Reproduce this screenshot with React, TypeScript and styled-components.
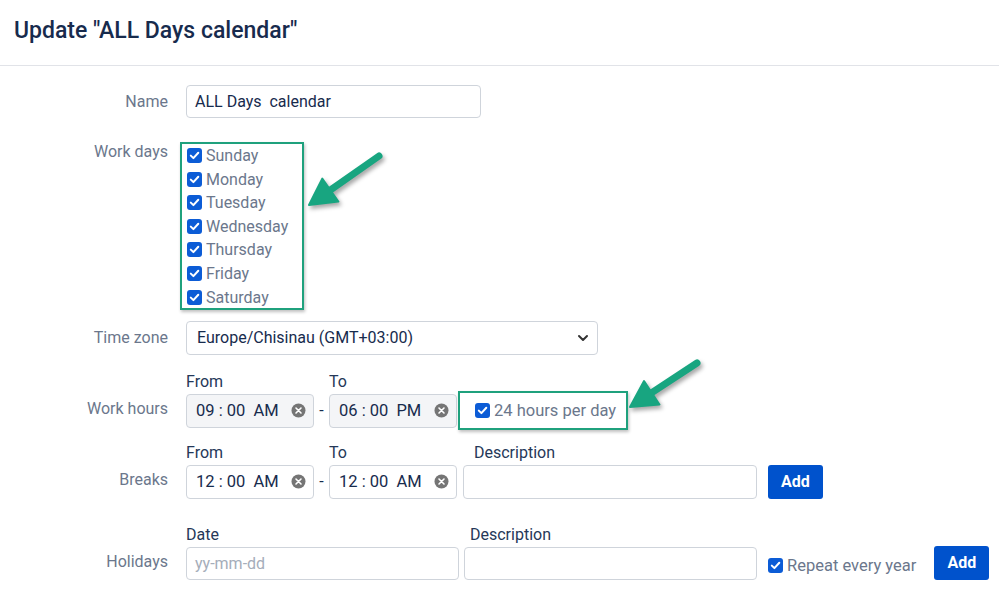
import React from "react";
import styled, { createGlobalStyle } from "styled-components";

const GlobalStyle = createGlobalStyle`
  body {
    margin: 0;
    background: #fff;
    font-family: Roboto, "Liberation Sans", Arial, sans-serif;
  }
`;

const Page = styled.div`
  position: relative;
  width: 999px;
  height: 595px;
  overflow: hidden;
  background: #fff;
`;

const Header = styled.div`
  height: 66px;
  display: flex;
  align-items: center;
  padding: 0 0 4px 14px;
  box-sizing: border-box;
  border-bottom: 1px solid #e1e3e8;
`;

const Title = styled.h1`
  margin: 0;
  font-size: 23px;
  font-weight: 500;
  color: #172b4d;
`;

const Form = styled.div`
  padding-top: 19px;
`;

const Row = styled.div<{ $top: number; $align?: string }>`
  display: flex;
  align-items: ${(p) => p.$align ?? "center"};
  margin-top: ${(p) => p.$top}px;
`;

const SideLabel = styled.div<{ $mb?: number }>`
  width: 186px;
  flex-shrink: 0;
  box-sizing: border-box;
  padding-right: 18px;
  margin-bottom: ${(p) => p.$mb ?? 0}px;
  text-align: right;
  font-size: 16px;
  line-height: 20px;
  color: #6b778c;
`;

const Stack = styled.div<{ $ml?: number }>`
  display: flex;
  flex-direction: column;
  gap: 2px;
  margin-left: ${(p) => p.$ml ?? 0}px;
`;

const SubLabel = styled.div<{ $indent?: number }>`
  font-size: 16px;
  line-height: 20px;
  color: #253858;
  padding-left: ${(p) => p.$indent ?? 0}px;
`;

const TextInput = styled.div<{ $width: number; $height?: number; $placeholder?: boolean }>`
  width: ${(p) => p.$width}px;
  height: ${(p) => p.$height ?? 34}px;
  box-sizing: border-box;
  border: 1px solid #cfd4db;
  border-radius: 4px;
  background: #fff;
  padding: 0 8px;
  display: flex;
  align-items: center;
  font-size: 16px;
  color: ${(p) => (p.$placeholder ? "#a5adba" : "#172b4d")};
  white-space: pre;
`;

const SelectBox = styled.div`
  width: 412px;
  height: 34px;
  box-sizing: border-box;
  border: 1px solid #cfd4db;
  border-radius: 4px;
  padding: 0 8px 0 10px;
  display: flex;
  align-items: center;
  justify-content: space-between;
  font-size: 16px;
  color: #172b4d;
`;

const TimeBox = styled.div<{ $disabled?: boolean }>`
  width: 128px;
  height: 34px;
  box-sizing: border-box;
  border: 1px solid #cfd4db;
  border-radius: 4px;
  background: ${(p) => (p.$disabled ? "#f4f5f7" : "#fff")};
  padding: 0 7px 0 9px;
  display: flex;
  align-items: center;
  justify-content: space-between;
  font-size: 16.5px;
  color: #172b4d;
  white-space: pre;
`;

const Dash = styled.div`
  width: 15px;
  height: 34px;
  line-height: 34px;
  text-align: center;
  font-size: 16px;
  color: #172b4d;
`;

const Highlight = styled.div`
  border: 2px solid #1fa17d;
  box-shadow: 1px 2px 3px rgba(0, 0, 0, 0.25);
`;

const DayList = styled(Highlight)`
  display: flex;
  flex-direction: column;
  gap: 2.6px;
  margin-left: -6px;
  padding: 1px 14px 0 5px;
`;

const HoursBox = styled(Highlight)`
  height: 39px;
  box-sizing: border-box;
  display: flex;
  align-items: center;
  gap: 4px;
  padding: 0 10px 0 15px;
  margin-left: 1px;
  margin-bottom: -2px;
  font-size: 16.5px;
  color: #6b778c;
`;

const CheckItem = styled.label<{ $height?: number; $ml?: number; $mb?: number; $size?: number }>`
  display: flex;
  align-items: center;
  gap: 4px;
  height: ${(p) => p.$height ?? 21}px;
  margin-left: ${(p) => p.$ml ?? 0}px;
  margin-bottom: ${(p) => p.$mb ?? 0}px;
  font-size: ${(p) => p.$size ?? 16}px;
  color: #6b778c;
`;

const Box = styled.span`
  width: 15px;
  height: 15px;
  border-radius: 3px;
  background: #0c5cd6;
  display: inline-flex;
  align-items: center;
  justify-content: center;
  flex-shrink: 0;
`;

const AddButton = styled.button<{ $ml: number }>`
  margin-left: ${(p) => p.$ml}px;
  width: 55px;
  height: 34px;
  border: none;
  border-radius: 3px;
  background: #0052cc;
  color: #fff;
  font-family: inherit;
  font-size: 16px;
  font-weight: 700;
  cursor: pointer;
`;

const Overlay = styled.svg`
  position: absolute;
  left: 0;
  top: 0;
  pointer-events: none;
`;

function Check() {
  return (
    <Box>
      <svg width="11" height="11" viewBox="0 0 11 11">
        <path d="M1.8 5.6 L4.4 8.1 L9.3 2.8" fill="none" stroke="#fff" strokeWidth="2" strokeLinecap="round" strokeLinejoin="round" />
      </svg>
    </Box>
  );
}

function ClearIcon() {
  return (
    <svg width="15" height="15" viewBox="0 0 15 15">
      <circle cx="7.5" cy="7.5" r="7" fill="#757575" />
      <path d="M5 5 L10 10 M10 5 L5 10" stroke="#fff" strokeWidth="1.6" strokeLinecap="round" />
    </svg>
  );
}

function Chevron() {
  return (
    <svg width="12" height="8" viewBox="0 0 12 8">
      <path d="M2 2 L6 6 L10 2" fill="none" stroke="#333" strokeWidth="2" strokeLinecap="round" strokeLinejoin="round" />
    </svg>
  );
}

function Time({ value, disabled }: { value: string; disabled?: boolean }) {
  return (
    <TimeBox $disabled={disabled}>
      <span>{value}</span>
      <ClearIcon />
    </TimeBox>
  );
}

function Arrow({ tail, tip }: { tail: [number, number]; tip: [number, number] }) {
  const dx = tip[0] - tail[0];
  const dy = tip[1] - tail[1];
  const len = Math.hypot(dx, dy);
  const ux = dx / len;
  const uy = dy / len;
  const headLen = 26;
  const headHalf = 14;
  const bx = tip[0] - ux * headLen;
  const by = tip[1] - uy * headLen;
  const sx = tip[0] - ux * (headLen - 4);
  const sy = tip[1] - uy * (headLen - 4);
  const p1 = `${bx - uy * headHalf},${by + ux * headHalf}`;
  const p2 = `${bx + uy * headHalf},${by - ux * headHalf}`;
  return (
    <g style={{ filter: "drop-shadow(2px 3px 2px rgba(0,0,0,0.35))" }}>
      <line x1={tail[0]} y1={tail[1]} x2={sx} y2={sy} stroke="#18a580" strokeWidth="7" strokeLinecap="round" />
      <polygon points={`${tip[0]},${tip[1]} ${p1} ${p2}`} fill="#18a580" stroke="#18a580" strokeWidth="2" strokeLinejoin="round" />
    </g>
  );
}

const days = ["Sunday", "Monday", "Tuesday", "Wednesday", "Thursday", "Friday", "Saturday"];

export default function App() {
  return (
    <Page>
      <GlobalStyle />
      <Header>
        <Title>Update "ALL Days calendar"</Title>
      </Header>
      <Form>
        <Row $top={0}>
          <SideLabel>Name</SideLabel>
          <TextInput $width={295} $height={33}>ALL Days  calendar</TextInput>
        </Row>

        <Row $top={24} $align="flex-start">
          <SideLabel>Work days</SideLabel>
          <DayList>
            {days.map((d) => (
              <CheckItem key={d}>
                <Check />
                {d}
              </CheckItem>
            ))}
          </DayList>
        </Row>

        <Row $top={11}>
          <SideLabel>Time zone</SideLabel>
          <SelectBox>
            <span>Europe/Chisinau (GMT+03:00)</span>
            <Chevron />
          </SelectBox>
        </Row>

        <Row $top={17} $align="flex-end">
          <SideLabel $mb={9}>Work hours</SideLabel>
          <Stack>
            <SubLabel>From</SubLabel>
            <Time value="09 : 00  AM" disabled />
          </Stack>
          <Dash>-</Dash>
          <Stack>
            <SubLabel>To</SubLabel>
            <Time value="06 : 00  PM" disabled />
          </Stack>
          <HoursBox>
            <Check />
            24 hours per day
          </HoursBox>
        </Row>

        <Row $top={15} $align="flex-end">
          <SideLabel $mb={9}>Breaks</SideLabel>
          <Stack>
            <SubLabel>From</SubLabel>
            <Time value="12 : 00  AM" />
          </Stack>
          <Dash>-</Dash>
          <Stack>
            <SubLabel>To</SubLabel>
            <Time value="12 : 00  AM" />
          </Stack>
          <Stack $ml={6}>
            <SubLabel $indent={11}>Description</SubLabel>
            <TextInput $width={294} />
          </Stack>
          <AddButton $ml={11}>Add</AddButton>
        </Row>

        <Row $top={26} $align="flex-end">
          <SideLabel $mb={8}>Holidays</SideLabel>
          <Stack>
            <SubLabel>Date</SubLabel>
            <TextInput $width={273} $height={33} $placeholder>yy-mm-dd</TextInput>
          </Stack>
          <Stack $ml={5}>
            <SubLabel $indent={6}>Description</SubLabel>
            <TextInput $width={293} $height={33} />
          </Stack>
          <CheckItem $height={33} $ml={11} $mb={-2} $size={16.5}>
            <Check />
            Repeat every year
          </CheckItem>
          <AddButton $ml={18}>Add</AddButton>
        </Row>
      </Form>

      <Overlay width="999" height="595" viewBox="0 0 999 595">
        <Arrow tail={[379, 156]} tip={[309, 205]} />
        <Arrow tail={[697, 363]} tip={[630, 407]} />
      </Overlay>
    </Page>
  );
}
